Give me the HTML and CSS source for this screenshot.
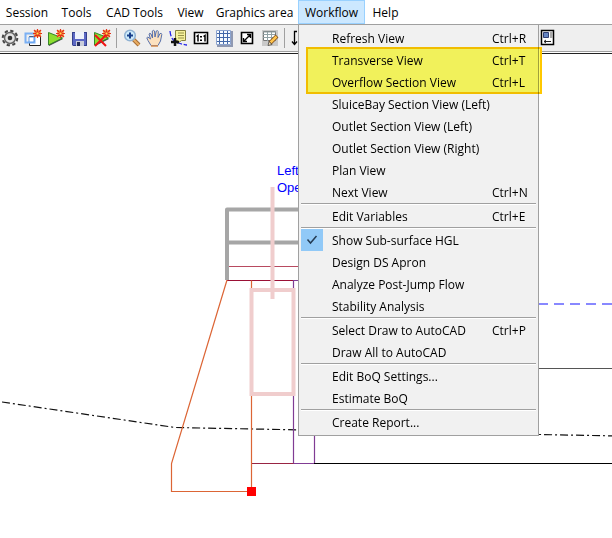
FILE: index.html
```html
<!DOCTYPE html>
<html lang="en">
<head>
<meta charset="utf-8">
<title>Section drawing</title>
<link rel="stylesheet" href="styles.css">
</head>
<body>
<nav class="menubar" aria-label="Main menu">
  <div class="entry"><button class="top">Session</button></div>
  <div class="entry"><button class="top">Tools</button></div>
  <div class="entry"><button class="top">CAD Tools</button></div>
  <div class="entry"><button class="top">View</button></div>
  <div class="entry"><button class="top">Graphics area</button></div>
  <div class="entry">
    <button class="top open" aria-expanded="true">Workflow</button>
    <div class="menu" role="menu">
      <button class="item" role="menuitem"><span class="mark"></span><span>Refresh View</span><span>Ctrl+R</span></button>
      <button class="item" role="menuitem"><span class="mark"></span><span>Transverse View</span><span>Ctrl+T</span></button>
      <button class="item" role="menuitem"><span class="mark"></span><span>Overflow Section View</span><span>Ctrl+L</span></button>
      <button class="item" role="menuitem"><span class="mark"></span><span>SluiceBay Section View (Left)</span></button>
      <button class="item" role="menuitem"><span class="mark"></span><span>Outlet Section View (Left)</span></button>
      <button class="item" role="menuitem"><span class="mark"></span><span>Outlet Section View (Right)</span></button>
      <button class="item" role="menuitem"><span class="mark"></span><span>Plan View</span></button>
      <button class="item" role="menuitem"><span class="mark"></span><span>Next View</span><span>Ctrl+N</span></button>
      <hr>
      <button class="item" role="menuitem"><span class="mark"></span><span>Edit Variables</span><span>Ctrl+E</span></button>
      <hr>
      <button class="item" role="menuitemcheckbox" aria-checked="true"><span class="mark checked"><svg width="22" height="22" viewBox="0 0 22 22"><path d="M6.500 10.500l3 3.500l6-7" fill="none" stroke="#243b53" stroke-width="1.500"/></svg></span><span>Show Sub-surface HGL</span></button>
      <button class="item" role="menuitem"><span class="mark"></span><span>Design DS Apron</span></button>
      <button class="item" role="menuitem"><span class="mark"></span><span>Analyze Post-Jump Flow</span></button>
      <button class="item" role="menuitem"><span class="mark"></span><span>Stability Analysis</span></button>
      <hr>
      <button class="item" role="menuitem"><span class="mark"></span><span>Select Draw to AutoCAD</span><span>Ctrl+P</span></button>
      <button class="item" role="menuitem"><span class="mark"></span><span>Draw All to AutoCAD</span></button>
      <hr>
      <button class="item" role="menuitem"><span class="mark"></span><span>Edit BoQ Settings...</span></button>
      <button class="item" role="menuitem"><span class="mark"></span><span>Estimate BoQ</span></button>
      <hr>
      <button class="item" role="menuitem"><span class="mark"></span><span>Create Report...</span></button>
      <div class="highlight"></div>
    </div>
  </div>
  <div class="entry"><button class="top">Help</button></div>
</nav>

<div class="toolbar" role="toolbar">
  <button class="tool" aria-label="Settings"><svg viewBox="0 0 18 18"><circle cx="9" cy="9" r="7.300" fill="none" stroke="#454545" stroke-width="2" stroke-dasharray="3.300 2.433"/><circle cx="9" cy="9" r="5.500" fill="#e2e2e2" stroke="#666" stroke-width="1.500"/><circle cx="9" cy="9" r="2.300" fill="#333"/></svg></button>
  <button class="tool" aria-label="New view"><svg viewBox="0 0 18 18"><path d="M5.500 7.500h11v9h-11z" fill="#fff" stroke="#222"/><path d="M1.500 4.500h9v9h-9z" fill="none" stroke="#7ab0f4" stroke-width="2"/><path d="M5 8h5v5H5z" fill="#fff" stroke="#5c9bec"/><g id="spark"><path d="M10 1h7v7h-7z" fill="#f7b05d"/><path d="M13.500 0v9M9 4.500h9M10 1l7 7M17 1l-7 7" stroke="#e3311c" stroke-width="1.200"/><path d="M12.500 3.500h2v2h-2z" fill="#ffe84d"/></g></svg></button>
  <button class="tool" aria-label="Run new"><svg viewBox="0 0 18 18"><path d="M2 4v13l14-7z" fill="#444"/><path d="M1.500 3.500v12.500l14-7z" fill="#8ddd30" stroke="#38872c"/><use href="#spark"/></svg></button>
  <button class="tool" aria-label="Save"><svg viewBox="0 0 18 18"><path d="M2 3h15v14H3l-1-1z" fill="#4851a5"/><path d="M2.500 3.500h14v13h-13l-1-1z" fill="#5c68c4" stroke="#34408b"/><path d="M5 3h9v7H5z" fill="#eef2fb"/><path d="M6 12h8v5H6z" fill="#c9cdda"/><path d="M7 13h3v4H7z" fill="#252c5c"/></svg></button>
  <button class="tool" aria-label="Cancel run"><svg viewBox="0 0 18 18"><path d="M2 4v13l14-7z" fill="#444"/><path d="M1.500 3.500v12.500l14-7z" fill="#8ddd30" stroke="#38872c"/><use href="#spark"/><path d="M2 6l11 11M13 6L2 17" stroke="#f01414" stroke-width="2"/></svg></button>
  <span class="divider"></span>
  <button class="tool" aria-label="Zoom in"><svg viewBox="0 0 18 18"><path d="M10 10l6 6" stroke="#a56d36" stroke-width="4"/><path d="M10 10l6 6" stroke="#e9ad62" stroke-width="2"/><circle cx="7" cy="6.500" r="5.300" fill="#cdeafa" stroke="#8fb1d2" stroke-width="1.500"/><path d="M7 3.500v6M4 6.500h6" stroke="#173f8a" stroke-width="2"/></svg></button>
  <button class="tool" aria-label="Pan"><svg viewBox="0 0 18 18"><path d="M5 16.500L2 11.500L.8 8.800q.8-1.300 2.200 0L4.500 10L3 5q.7-1.500 2 0l1.500 4L6.300 2q1.200-1.300 2.200 0l.5 6l1.300-6q1.500-1 2 .5L12 8.500l2-4q1.700-.6 1.800 1L14.500 12L12 16.500z" fill="#fce1bf" stroke="#5670ac"/><path d="M5 17h7" stroke="#d88e4b" stroke-width="1.500"/></svg></button>
  <button class="tool" aria-label="Annotate"><svg viewBox="0 0 18 18"><path d="M1 2q1 10 8 12t9 2" fill="none" stroke="#2424e8" stroke-width="1.300" stroke-dasharray="5 2"/><path d="M6.500 1.500h10v10h-4l-4 3v-3h-2z" fill="#f6f29a" stroke="#85813f"/><path d="M9 4h6M9 6.500h6M9 9h6" stroke="#96924b"/><path d="M6 9v8M2 13h8" stroke="#111" stroke-width="2.500"/></svg></button>
  <button class="tool" aria-label="Actual size"><svg viewBox="0 0 18 18"><path d="M2.500 3.500h13v11h-13z" fill="#fff" stroke="#000" stroke-width="1.600"/><path d="M4.500 7.500L6 6.500v6M11.500 7.500l1.500-1v6" fill="none" stroke="#000" stroke-width="1.500"/><path d="M8 7h2v1.500H8zM8 10.500h2V12H8z"/></svg></button>
  <button class="tool" aria-label="Grid"><svg viewBox="0 0 18 18"><path d="M2 2h16v16H2z" fill="#8f99b2"/><path d="M1 1h15v15H1z" fill="#f8fcff"/><path d="M1 4.500h15M1 8.500h15M1 12.500h15M4.500 1v15M8.500 1v15M12.500 1v15" stroke="#4368a9"/><path d="M1.500 1.500h14v14h-14z" fill="none" stroke="#8ba3ce"/></svg></button>
  <button class="tool" aria-label="Fit to window"><svg viewBox="0 0 18 18"><path d="M3.500 3.500h11v11h-11z" fill="#fff" stroke="#000" stroke-width="1.600"/><path d="M6 12l6-6M9 5.500h3.500V9M5.500 9v3.500H9" fill="none" stroke="#000" stroke-width="1.400"/></svg></button>
  <button class="tool" aria-label="Edit table"><svg viewBox="0 0 18 18"><path d="M1 1h16v16H1z" fill="#c9c9c9"/><path d="M2.500 2.500h12v9h-12z" fill="#fff" stroke="#777"/><path d="M2 3h13M2 5.500h12M2 8.500h12M6.500 3v9M10.500 3v9" stroke="#92a2a5"/><path d="M16 7l-7 7" stroke="#7d4b17" stroke-width="4"/><path d="M15.500 7.500L9.500 13.500" stroke="#ffc44c" stroke-width="2.500"/><path d="M7 16.500l1-4l3 3z" fill="#f6dfb6" stroke="#333" stroke-width=".7"/></svg></button>
  <span class="divider"></span>
  <button class="tool" aria-label="Dimension"><svg viewBox="0 0 18 18"><path d="M6 2.500H3.500v12.500M1 12.500l2.500 3l2.500-3" fill="none" stroke="#000" stroke-width="1.300"/></svg></button>
  <span class="covered"></span>
  <button class="tool" aria-label="Drawing sheet"><svg viewBox="0 0 18 18"><path d="M3.500 1.500h12v14h-12z" fill="#fff" stroke="#000" stroke-width="1.500"/><path d="M5.500 3.500h5v5h-5z" fill="#6585c2" stroke="#303f73"/><path d="M12 3h3v6h-3z" fill="#aaa"/><path d="M6 12.500h7M8 11l-2 1.500L8 14" fill="none" stroke="#222"/></svg></button>
</div>

<main class="canvas">
  <svg class="drawing" role="img" aria-label="Sluice cross section">
    <g transform="translate(0 -54)" fill="none">
      <path d="M2 402L175 427.500L540 434.500L2400 470" stroke="#111" stroke-dasharray="8 3 2 3" stroke-width="1.200"/>
      <path d="M227 266.500h90" stroke="#b84a60"/>
      <path d="M227 280.500h66" stroke="#9b1035" stroke-width="1.200"/>
      <path d="M293.500 463.500v-183h21v183zM251.500 463.500h62" stroke="#803c94" stroke-width="1.200"/>
      <path d="M251.500 463.500h42" stroke="#982443" stroke-width="1.200"/>
      <path d="M227 280L171.500 463.500v28h80v-211" stroke="#dc6535" stroke-width="1.200"/>
      <path d="M314 463.500h2000" stroke="#000"/>
      <path d="M500 368.500h2000" stroke="#555"/>
      <path d="M506 304h2000" stroke="#6262ff" stroke-width="1.500" stroke-dasharray="10 6"/>
      <path d="M228 242.500h90M227 280v-70.500h90" stroke="#a6a6a6" stroke-width="4" stroke-linejoin="round"/>
      <path d="M251.500 290h42v104h-42zM272.500 187v112" stroke="#f0cdcd" stroke-width="4"/>
      <path d="M247 487h9v9h-9z" fill="#f00"/>
      <g class="label"><text x="277" y="175">Left</text><text x="277" y="192">Open</text></g>
    </g>
  </svg>
</main>
</body>
</html>
```
FILE: styles.css
```css
* {
  box-sizing: border-box;
}

body {
  margin: 0;
  background: #fff;
  color: #000;
  font: 12px/16px "Open Sans", "Noto Sans", sans-serif;
  overflow: hidden;
}

button {
  margin: 0;
  padding: 0;
  border: 0;
  background: none;
  color: inherit;
  font: inherit;
}

.menubar {
  display: grid;
  grid-template-columns: 54px 45px 71px 41px 87px 67px 41px;
  height: 24px;
}

.entry {
  position: relative;
}

.top {
  width: 100%;
  height: 24px;
  padding-top: 1px;
  white-space: nowrap;
}

.open {
  border: 1px solid #99d1ff;
  background: #cce8ff;
}

.menu {
  position: absolute;
  z-index: 1;
  top: 24px;
  left: 0;
  width: 241px;
  padding: 2px;
  border: 1px solid #a0a0a0;
  background: #f1f1f1;
}

.item {
  display: grid;
  grid-template-columns: 22px 151px 1fr;
  column-gap: 9px;
  align-items: center;
  width: 100%;
  height: 22px;
  line-height: 18px;
  text-align: left;
  white-space: nowrap;
}

.item span + span {
  padding-top: 2px;
}

.mark {
  height: 22px;
}

.checked {
  background: #91c9f7;
}

.menu hr {
  height: 2px;
  margin: 0;
  border: 0;
  border-top: 1px solid #a0a0a0;
  background: #fff;
}

.highlight {
  position: absolute;
  top: 22px;
  left: 7px;
  width: 236px;
  height: 47px;
  border: 2px solid #ffc800;
  background: #ffff60;
  mix-blend-mode: multiply;
  pointer-events: none;
}

.toolbar {
  display: flex;
  align-items: center;
  gap: 5px;
  height: 28px;
  padding-left: 1px;
  border-top: 1px solid #a0a0a0;
  border-bottom: 1px solid #a0a0a0;
  background: #efefef;
}

.tool {
  flex: none;
  width: 18px;
  height: 18px;
}

.tool svg,
.mark svg,
.drawing {
  display: block;
}

.divider {
  flex: none;
  width: 2px;
  height: 20px;
  border-left: 1px solid #a0a0a0;
}

.covered {
  flex: none;
  width: 219px;
}

.canvas {
  margin-top: 1px;
  border-top: 1px solid #222;
}

.drawing {
  width: 100%;
  height: 484px;
}

.label {
  fill: #00f;
  font: 13px "Liberation Sans", sans-serif;
}
```
